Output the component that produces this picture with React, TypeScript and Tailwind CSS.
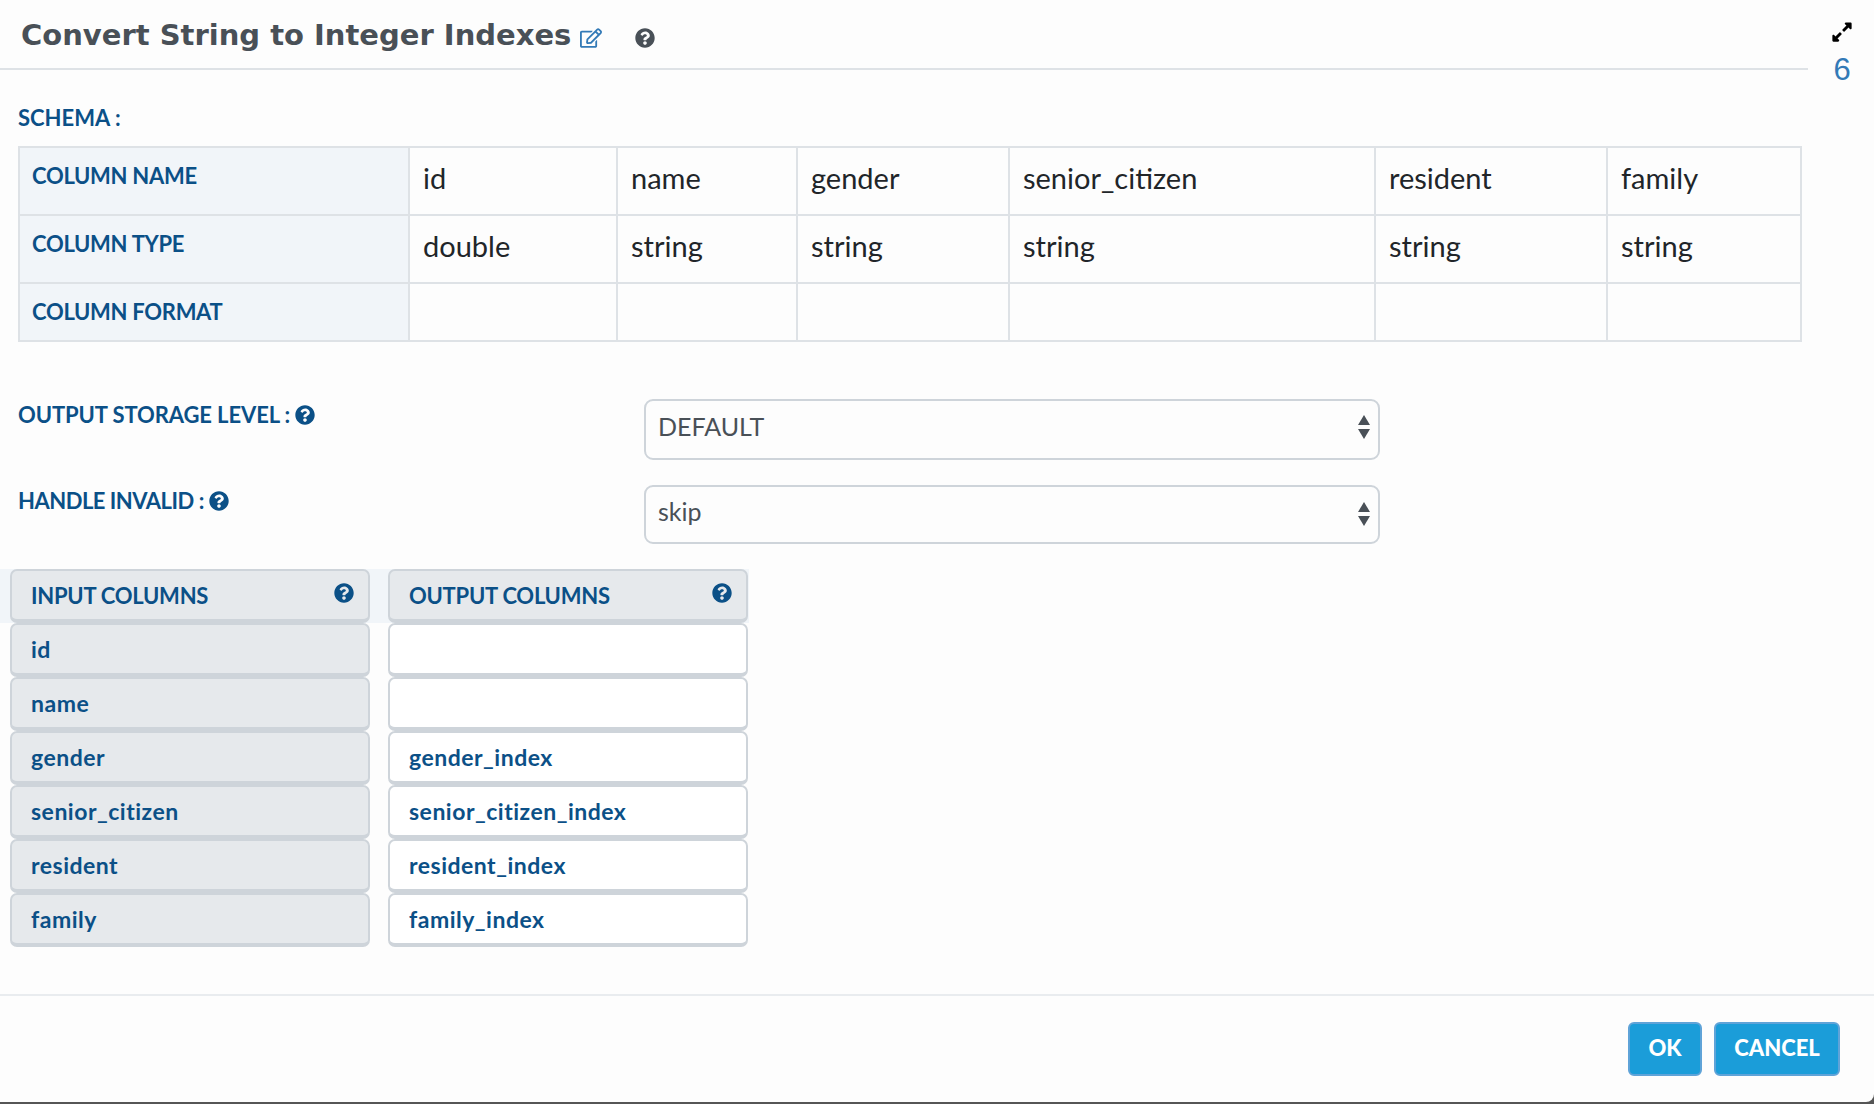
import { FaExpandAlt, FaQuestionCircle, FaRegEdit } from 'react-icons/fa';

const schemaCols = [
  { name: 'id', type: 'double', width: 'w-[208px]' },
  { name: 'name', type: 'string', width: 'w-[180px]' },
  { name: 'gender', type: 'string', width: 'w-[212px]' },
  { name: 'senior_citizen', type: 'string', width: 'w-[366px]' },
  { name: 'resident', type: 'string', width: 'w-[232px]' },
  { name: 'family', type: 'string', width: 'w-[194px]' },
];

const mappings = [
  { input: 'id', output: '' },
  { input: 'name', output: '' },
  { input: 'gender', output: 'gender_index' },
  { input: 'senior_citizen', output: 'senior_citizen_index' },
  { input: 'resident', output: 'resident_index' },
  { input: 'family', output: 'family_index' },
];

function HeadCell({ children, className }: { children: string; className: string }) {
  return (
    <th className={`border-2 border-[#dee2e6] bg-[#f1f5f9] pl-[12px] pt-[13px] align-top text-left text-[22px] font-bold leading-[30px] tracking-[-0.3px] text-[#0b5087] ${className}`}>
      {children}
    </th>
  );
}

function SelectField({ value, height, top }: { value: string; height: string; top: string }) {
  return (
    <div className={`relative w-[736px] ${height}`}>
      <select
        defaultValue={value}
        className="h-full w-full appearance-none rounded-[9px] border-2 border-[#ced4da] bg-[#fdfdfd] pb-[5px] pl-[12px] text-[25px] text-[#495057] outline-none"
      >
        <option>{value}</option>
      </select>
      <svg className={`pointer-events-none absolute right-[9px] h-[25px] w-[14px] ${top}`} viewBox="0 0 14 25" fill="#495057">
        <path d="M7 0 L13 10 L1 10 Z" />
        <path d="M1 14 L13 14 L7 24 Z" />
      </svg>
    </div>
  );
}

function MapHeader({ label }: { label: string }) {
  return (
    <div className="flex h-[54px] w-[360px] items-center justify-between rounded-[7px] border-2 border-b-[4px] border-[#ced4da] bg-[#e6e9ec] pl-[19px] pr-[14px]">
      <span className="text-[22px] font-bold tracking-[-0.25px] text-[#0b5087]">{label}</span>
      <FaQuestionCircle className="mb-[4px] h-[20px] w-[20px] text-[#0b5087]" />
    </div>
  );
}

export default function App() {
  return (
    <div className="flex h-[1104px] w-[1874px] flex-col overflow-hidden bg-[#555555] font-['Lato',sans-serif]">
      <div className="flex h-[1102px] flex-col rounded-br-[8px] bg-[#fdfdfd]">
        {/* title bar */}
        <div className="flex h-[92px] shrink-0 items-start">
          <div className="flex h-[70px] w-[1808px] items-center border-b-2 border-[#dee2e6] pl-[21px] pt-[4px]">
            <h1 className="font-['DejaVu_Sans',sans-serif] text-[29px] font-bold text-[#495057]">Convert String to Integer Indexes</h1>
            <FaRegEdit className="ml-[9px] mt-[3px] h-[22px] w-[22px] text-[#337ab7]" />
            <FaQuestionCircle className="ml-[33px] mt-[3px] h-[20px] w-[20px] text-[#495057]" />
          </div>
          <div className="flex flex-col items-center pl-[23px] pt-[21px]">
            <FaExpandAlt className="h-[22px] w-[22px] text-black" />
            <span className="mt-[10px] font-['Liberation_Sans',sans-serif] text-[31px] leading-[34px] text-[#337ab7]">6</span>
          </div>
        </div>

        <div className="mt-[11px] pl-[18px] text-[22px] font-bold leading-[30px] text-[#0b5087]">SCHEMA :</div>

        {/* schema table */}
        <table className="ml-[18px] mt-[13px] w-[1782px] table-fixed border-collapse">
          <tbody>
            <tr className="h-[68px]">
              <HeadCell className="w-[390px]">COLUMN NAME</HeadCell>
              {schemaCols.map((c) => (
                <td key={c.name} className={`border-2 border-[#dee2e6] pb-[7px] pl-[13px] text-[29px] text-[#212529] ${c.width}`}>{c.name}</td>
              ))}
            </tr>
            <tr className="h-[68px]">
              <HeadCell className="">COLUMN TYPE</HeadCell>
              {schemaCols.map((c) => (
                <td key={c.name} className="border-2 border-[#dee2e6] pb-[7px] pl-[13px] text-[29px] text-[#212529]">{c.type}</td>
              ))}
            </tr>
            <tr className="h-[58px]">
              <HeadCell className="">COLUMN FORMAT</HeadCell>
              {schemaCols.map((c) => (
                <td key={c.name} className="border-2 border-[#dee2e6]" />
              ))}
            </tr>
          </tbody>
        </table>

        {/* options */}
        <div className="mt-[57px] flex pl-[18px]">
          <div className="flex w-[626px] items-center gap-[5px] self-start pt-[1px] text-[22px] font-bold leading-[30px] tracking-[-0.1px] text-[#0b5087]">
            OUTPUT STORAGE LEVEL :
            <FaQuestionCircle className="h-[20px] w-[20px]" />
          </div>
          <SelectField value="DEFAULT" height="h-[61px]" top="top-[16px]" />
        </div>
        <div className="mt-[25px] flex pl-[18px]">
          <div className="flex w-[626px] items-center gap-[5px] self-start pt-[1px] text-[22px] font-bold leading-[30px] tracking-[-0.5px] text-[#0b5087]">
            HANDLE INVALID :
            <FaQuestionCircle className="h-[20px] w-[20px]" />
          </div>
          <SelectField value="skip" height="h-[59px]" top="top-[17px]" />
        </div>

        {/* column mapping */}
        <div className="mt-[25px] flex w-[749px] gap-[18px] bg-[#f1f5f9] pl-[10px]">
          <MapHeader label="INPUT COLUMNS" />
          <MapHeader label="OUTPUT COLUMNS" />
        </div>
        <div className="flex flex-col pl-[10px]">
          {mappings.map((m) => (
            <div key={m.input} className="flex h-[54px] gap-[18px] text-[23px] font-bold tracking-[0.5px] text-[#0b5087]">
              <div className="flex w-[360px] items-center rounded-[7px] border-2 border-b-[4px] border-[#ced4da] bg-[#e6e9ec] pl-[19px]">{m.input}</div>
              <div className="flex w-[360px] items-center rounded-[7px] border-2 border-b-[4px] border-[#ced4da] bg-white pl-[19px]">{m.output}</div>
            </div>
          ))}
        </div>

        {/* footer */}
        <div className="mt-[47px] flex flex-1 justify-end gap-[12px] border-t-2 border-[#e9ecef] pr-[34px] pt-[26px]">
          <button className="h-[54px] w-[74px] rounded-[6px] border-2 border-[#5fa3d8] bg-[#1b9dd9] pb-[3px] text-[22px] font-black text-white">OK</button>
          <button className="h-[54px] w-[126px] rounded-[6px] border-2 border-[#5fa3d8] bg-[#1b9dd9] pb-[3px] text-[22px] font-black text-white">CANCEL</button>
        </div>
      </div>
    </div>
  );
}
